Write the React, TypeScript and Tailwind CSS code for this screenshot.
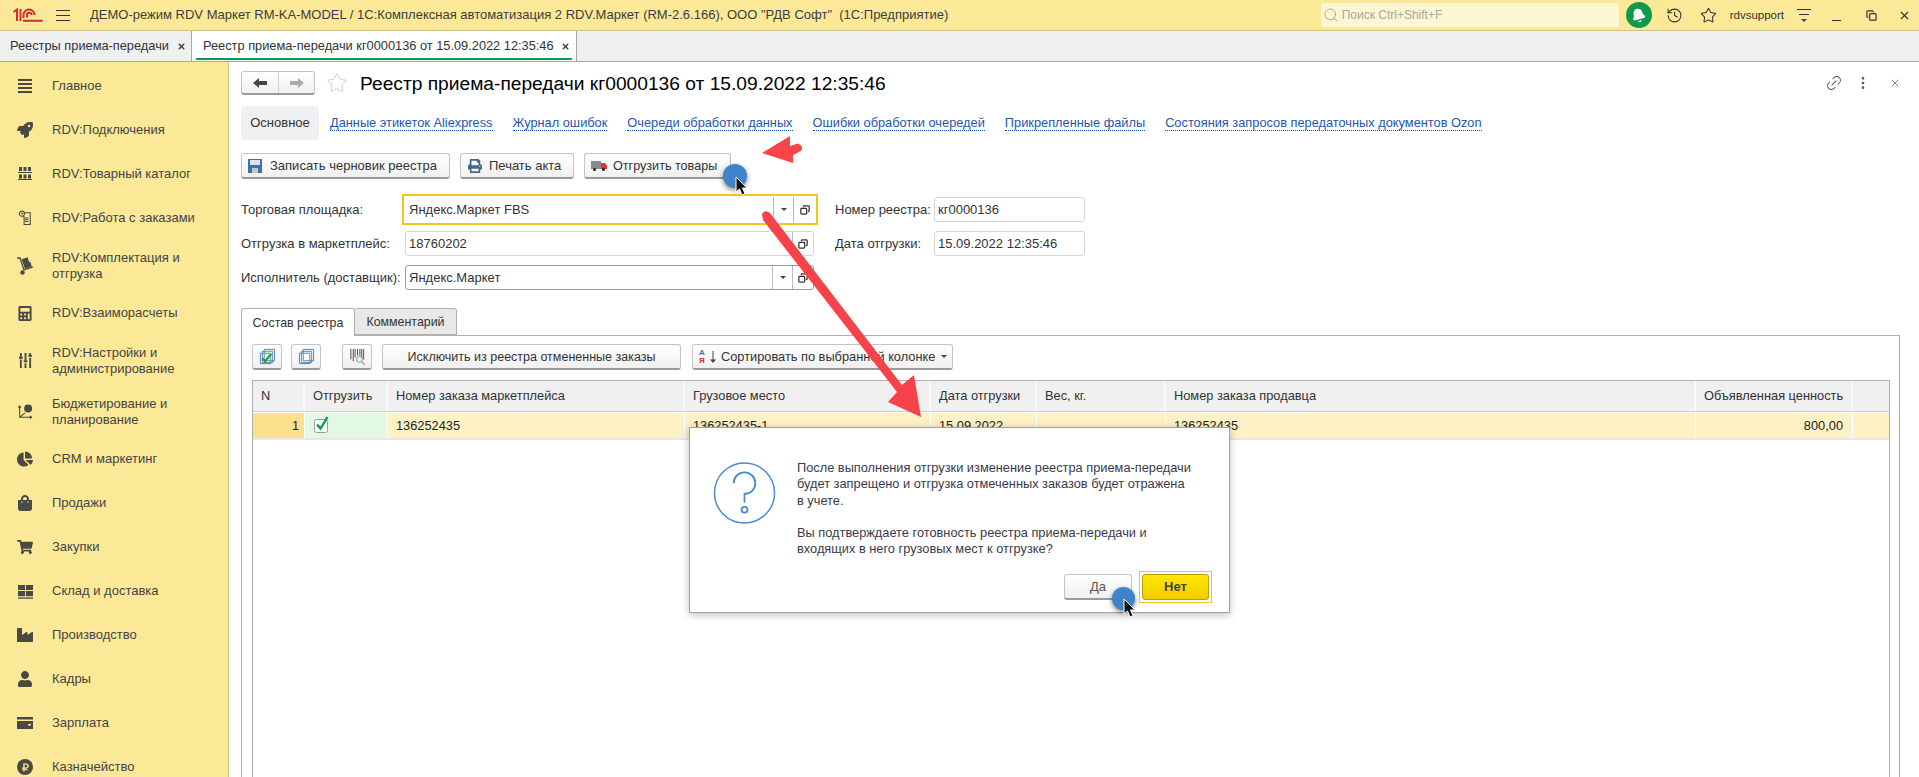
import type { ReactNode } from 'react';
import { Bell, Copy, History, Link2, MoreVertical, Search, Star, X } from 'lucide-react';
import {
    FaCalculator, FaChartPie, FaIndustry, FaRocket, FaShoppingBag, FaShoppingCart,
    FaUser, FaRubleSign, FaPrint,
} from 'react-icons/fa';

const iconCls = 'w-[16px] h-[16px] text-[#4a4a42]';

function Lines() {
    return (
        <svg viewBox="0 0 14 14" className="h-[14px] w-[14px] text-[#4a4a42]" fill="currentColor">
            <path d="M0 0h14v2H0zM0 4h14v2H0zM0 8h14v2H0zM0 12h14v2H0z" />
        </svg>
    );
}

function Pallets() {
    return (
        <svg viewBox="0 0 14 14" className="h-[14px] w-[14px] text-[#4a4a42]" fill="currentColor">
            <path d="M1 0h3v4H1zM5.500 0h3v4h-3zM10 0h3v4h-3zM0 5h14v1H0zM1 7.500h3v4H1zM5.500 7.500h3v4h-3zM10 7.500h3v4h-3zM0 12h14v1H0z" />
        </svg>
    );
}

function OrderClock() {
    return (
        <svg viewBox="0 0 16 18" className="w-[14px] h-[18px] text-[#4a4a42]" fill="none" stroke="currentColor" strokeWidth="1.2">
            <circle cx="4.500" cy="4" r="3" />
            <path d="M4.500 2.500V4h1.500M5 7.500h2v9h7V3H8M8 9h4M8 11h4M8 13h4" />
        </svg>
    );
}

function Hand() {
    return (
        <svg viewBox="0 0 18 18" className="w-[18px] h-[18px] text-[#4a4a42]" fill="none" stroke="currentColor" strokeWidth="1.3">
            <path d="M1 1h3l4 12 9-3" />
            <circle cx="6.500" cy="15.500" r="1.600" fill="currentColor" />
            <rect x="7" y="2" width="5" height="4" fill="currentColor" transform="rotate(-18 9 4)" />
            <rect x="8.500" y="6.500" width="6" height="4" fill="currentColor" transform="rotate(-18 11 8)" />
        </svg>
    );
}

function Sliders() {
    return (
        <svg viewBox="0 0 14 16" className="w-[13px] h-[15px] text-[#4a4a42]" fill="currentColor">
            <path d="M1 0h2v4h1v2H0V4h1zM1 7h2v9H1zM6 0h2v8h1v2H5V8h1zM6 11h2v5H6zM11 0h2v2h1v2h-4V2h1zM11 5h2v11h-2z" />
        </svg>
    );
}

function Budget() {
    return (
        <svg viewBox="0 0 18 18" className="w-[16px] h-[16px] text-[#4a4a42]" fill="none" stroke="currentColor" strokeWidth="1.2">
            <path d="M3 2v13h13M1.500 4L3 2l1.500 2M14.500 13.500l2 1.500-2 1.500M3 15l6-5" />
            <circle cx="12.500" cy="5" r="4.500" fill="currentColor" stroke="none" />
        </svg>
    );
}

function Warehouse() {
    return (
        <svg viewBox="0 0 16 16" className="w-[15px] h-[15px] text-[#4a4a42]" fill="currentColor">
            <path d="M0 1h7.500v5.500H0zM8.500 1H16v5.500H8.500zM0 7.500h7.500V13H0zM8.500 7.500H16V13H8.500zM0 14.500h16v1.200H0z" />
        </svg>
    );
}

function Wallet() {
    return (
        <svg viewBox="0 0 16 12" className="w-[16px] h-[12px] text-[#4a4a42]" fill="currentColor">
            <path d="M0 0h16v2.500H0zM0 4h16v8H0zM11 7v1.500h3V7z" fillRule="evenodd" />
        </svg>
    );
}

const menu: { label: ReactNode; icon: ReactNode; tall?: boolean }[] = [
    { label: 'Главное', icon: <Lines /> },
    { label: 'RDV:Подключения', icon: <FaRocket className={iconCls} /> },
    { label: 'RDV:Товарный каталог', icon: <Pallets /> },
    { label: 'RDV:Работа с заказами', icon: <OrderClock /> },
    { label: <>RDV:Комплектация и<br />отгрузка</>, icon: <Hand />, tall: true },
    { label: 'RDV:Взаиморасчеты', icon: <FaCalculator className="w-[14px] h-[15px] text-[#4a4a42]" /> },
    { label: <>RDV:Настройки и<br />администрирование</>, icon: <Sliders />, tall: true },
    { label: <>Бюджетирование и<br />планирование</>, icon: <Budget />, tall: true },
    { label: 'CRM и маркетинг', icon: <FaChartPie className={iconCls} /> },
    { label: 'Продажи', icon: <FaShoppingBag className={iconCls} /> },
    { label: 'Закупки', icon: <FaShoppingCart className={iconCls} /> },
    { label: 'Склад и доставка', icon: <Warehouse /> },
    { label: 'Производство', icon: <FaIndustry className={iconCls} /> },
    { label: 'Кадры', icon: <FaUser className={iconCls} /> },
    { label: 'Зарплата', icon: <Wallet /> },
    { label: 'Казначейство', icon: <span className="flex w-[16px] h-[16px] items-center justify-center rounded-full bg-[#4a4a42]"><FaRubleSign className="w-[9px] h-[9px] text-[#fbe997]" /></span> },
];

const links = [
    'Данные этикеток Aliexpress',
    'Журнал ошибок',
    'Очереди обработки данных',
    'Ошибки обработки очередей',
    'Прикрепленные файлы',
    'Состояния запросов передаточных документов Ozon',
];

const columns = [
    { title: 'N', value: '1', cell: 'bg-[#fde08c] justify-end pr-[5px]', head: 'pl-[8px]' },
    { title: 'Отгрузить', value: '', cell: 'bg-[#e3f8e3]', head: 'pl-[8px]' },
    { title: 'Номер заказа маркетплейса', value: '136252435', cell: 'bg-[#fdf1c5] pl-[8px]', head: 'pl-[8px]' },
    { title: 'Грузовое место', value: '136252435-1', cell: 'bg-[#fdf1c5] pl-[8px]', head: 'pl-[8px]' },
    { title: 'Дата отгрузки', value: '15.09.2022', cell: 'bg-[#fdf1c5] pl-[8px]', head: 'pl-[8px]' },
    { title: 'Вес, кг.', value: '', cell: 'bg-[#fdf1c5]', head: 'pl-[8px]' },
    { title: 'Номер заказа продавца', value: '136252435', cell: 'bg-[#fdf1c5] pl-[8px]', head: 'pl-[8px]' },
    { title: 'Объявленная ценность', value: '800,00', cell: 'bg-[#fdf1c5] justify-end pr-[9px]', head: 'pl-[8px]' },
    { title: '', value: '', cell: 'bg-[#fdf1c5]', head: '' },
];

function Btn({ className, children }: { className: string; children: ReactNode }) {
    return (
        <div className={`flex h-[26px] shrink-0 items-center rounded-[3px] border border-[#c4c4c4] border-b-[#9a9a9a] border-b-2 bg-gradient-to-b from-white to-[#f0f0f0] text-[#333] ${className}`}>
            {children}
        </div>
    );
}

function OpenIcon() {
    return <Copy className="h-[10px] w-[10px] -scale-x-100 text-[#333]" strokeWidth={3} />;
}

function Caret() {
    return <div className="h-0 w-0 border-x-[3px] border-t-[3px] border-x-transparent border-t-[#444]" />;
}

function Field({ value, dropdown, dark }: { value: string; dropdown?: boolean; dark?: boolean }) {
    return (
        <div className={`flex h-[25px] w-[409px] items-center rounded-[3px] border bg-white ${dark ? 'border-[#9a9a9a]' : 'border-[#d6d6d6]'}`}>
            <span className="flex-1 pl-[3px] text-[#333]">{value}</span>
            {dropdown && (
                <div className="flex h-full w-[20px] items-center justify-center border-l border-[#bbb]"><Caret /></div>
            )}
            <div className="flex h-full w-[21px] items-center justify-center border-l border-[#bbb]"><OpenIcon /></div>
        </div>
    );
}

function Cursor({ className }: { className: string }) {
    return (
        <svg viewBox="0 0 14 20" className={`absolute h-[20px] w-[14px] ${className}`}>
            <path d="M1 1v15l3.500-3 2.500 6 3-1.300-2.500-5.700H12z" fill="#111" stroke="#fff" strokeWidth="1" />
        </svg>
    );
}

export default function App() {
    return (
        <div className="relative flex h-[777px] w-full flex-col overflow-hidden bg-white font-['Liberation_Sans',Arial,sans-serif] text-[13px] leading-[16px] text-[#333]">
            {/* top bar */}
            <header className="flex h-[31px] shrink-0 items-center border-b border-[#cfc288] bg-[#fbe997]">
                <svg viewBox="0 0 30 14" className="ml-[13px] h-[14px] w-[30px]" fill="none" stroke="#d8262c" strokeWidth="1.900">
                    <path d="M0.500 4L4 1.500V13M7.500 13V1M10 12.700h19.500M10.500 10V7a5.500 5.500 0 0 1 11 0M14 9.500V7a2.300 2.300 0 0 1 4.600 0" />
                </svg>
                <div className="ml-[13px] flex w-[14px] flex-col gap-[4px]">
                    <div className="h-px bg-[#333]" />
                    <div className="h-px bg-[#333]" />
                    <div className="h-px bg-[#333]" />
                </div>
                <div className="ml-[20px] whitespace-pre text-[#3d3d3d]">ДЕМО-режим RDV Маркет RM-KA-MODEL / 1С:Комплексная автоматизация 2 RDV.Маркет (RM-2.6.166), ООО "РДВ Софт"  (1С:Предприятие)</div>
                <div className="ml-auto flex h-[24px] w-[298px] items-center rounded-[3px] bg-[#fdf6d2] pl-[2px] text-[12px] text-[#a8a8a0]">
                    <Search className="h-[16px] w-[16px] text-[#a8a8a0]" strokeWidth={1.5} />
                    <span className="ml-[3px]">Поиск Ctrl+Shift+F</span>
                </div>
                <div className="ml-[7px] flex h-[26px] w-[26px] items-center justify-center rounded-full bg-[#0b9b4b]">
                    <Bell className="h-[15px] w-[15px] rotate-[-15deg] text-white" fill="white" />
                </div>
                <History className="ml-[14px] h-[17px] w-[17px] text-[#333]" strokeWidth={1.5} />
                <Star className="ml-[17px] h-[17px] w-[17px] text-[#333]" strokeWidth={1.5} />
                <span className="ml-[13px] text-[11.500px] text-[#333]">rdvsupport</span>
                <div className="ml-[13px] flex w-[14px] flex-col items-center gap-[4px]">
                    <div className="h-px w-full bg-[#333]" />
                    <div className="h-px w-[10px] bg-[#333]" />
                    <Caret />
                </div>
                <div className="ml-[21px] mt-[10px] h-px w-[9px] bg-[#333]" />
                <Copy className="ml-[25px] h-[11px] w-[11px] text-[#333]" strokeWidth={2.6} />
                <X className="ml-[21px] mr-[8px] h-[13px] w-[13px] text-[#333]" strokeWidth={2} />
            </header>

            {/* open windows */}
            <div className="flex h-[31px] shrink-0 border-b border-[#a8a8a8] bg-[#f0f0f0] text-[12.800px]">
                <div className="flex w-[192px] items-center border-r border-[#a8a8a8] pl-[10px]">
                    <span>Реестры приема-передачи</span>
                    <X className="ml-[8px] h-[9px] w-[9px] text-[#444]" strokeWidth={4} />
                </div>
                <div className="relative flex w-[385px] items-center border-r border-[#a8a8a8] bg-white pl-[11px]">
                    <span>Реестр приема-передачи кг0000136 от 15.09.2022 12:35:46</span>
                    <X className="ml-[7px] h-[9px] w-[9px] text-[#444]" strokeWidth={4} />
                    <div className="absolute bottom-[1px] left-[4px] right-[4px] h-[2px] bg-[#0b9b4b]" />
                </div>
            </div>

            <div className="flex min-h-0 flex-1">
                {/* sections */}
                <nav className="flex w-[229px] shrink-0 flex-col overflow-hidden border-r border-[#cfc288] bg-[#fbe997] pt-[2px] text-[#444]">
                    {menu.map((item, i) => (
                        <div key={i} className={`flex shrink-0 items-center ${item.tall ? 'h-[51px]' : 'h-[44px]'}`}>
                            <div className="flex w-[52px] shrink-0 justify-center pr-[2px]">{item.icon}</div>
                            <div>{item.label}</div>
                        </div>
                    ))}
                </nav>

                {/* form */}
                <main className="flex min-w-0 flex-1 flex-col pl-[12px] pr-[19px] pt-[9px]">
                    <div className="flex h-[24px] items-center">
                        <div className="flex h-[24px] w-[74px] rounded-[3px] border border-[#c4c4c4] border-b-2 border-b-[#9a9a9a] bg-gradient-to-b from-white to-[#f0f0f0]">
                            <div className="flex w-[37px] items-center justify-center border-r border-[#d0d0d0]">
                                <svg viewBox="0 0 14 10" className="h-[10px] w-[14px]" fill="#444"><path d="M0 5l6-5v3h8v4H6v3z" /></svg>
                            </div>
                            <div className="flex flex-1 items-center justify-center">
                                <svg viewBox="0 0 14 10" className="h-[10px] w-[14px]" fill="#aaa"><path d="M14 5L8 0v3H0v4h8v3z" /></svg>
                            </div>
                        </div>
                        <Star className="ml-[11px] h-[22px] w-[22px] text-[#c8c8c8]" strokeWidth={1} />
                        <h1 className="ml-[12px] mt-[1px] text-[19.200px] font-normal leading-[24px] text-black">Реестр приема-передачи кг0000136 от 15.09.2022 12:35:46</h1>
                        <Link2 className="ml-auto mr-[12px] h-[18px] w-[18px] -rotate-45 text-[#555]" strokeWidth={1.3} />
                        <MoreVertical className="mr-[18px] h-[16px] w-[16px] text-[#555]" />
                        <X className="mr-[-1px] h-[12px] w-[12px] text-[#555]" strokeWidth={1.5} />
                    </div>

                    <div className="mt-[11px] flex h-[34px] items-center">
                        <div className="flex h-full w-[78px] items-center justify-center rounded-[4px] bg-[#f0f0f0]">Основное</div>
                        <div className="ml-[11px] flex gap-[20px] text-[12.800px]">
                            {links.map((l) => (
                                <span key={l} className="border-b border-dotted border-[#0b4fb0] leading-[15px] text-[#1f56ad]">{l}</span>
                            ))}
                        </div>
                    </div>

                    <div className="mt-[13px] flex gap-[10px]">
                        <Btn className="w-[209px] pl-[6px]">
                            <svg viewBox="0 0 14 14" className="h-[14px] w-[14px]">
                                <path d="M0 0h14v14H0z" fill="#3f72a8" />
                                <path d="M2 1h10v5H2z" fill="#d7e4f1" />
                                <path d="M4 9h6v5H4z" fill="#c7c7c7" />
                            </svg>
                            <span className="ml-[8px]">Записать черновик реестра</span>
                        </Btn>
                        <Btn className="w-[114px] pl-[7px]">
                            <FaPrint className="h-[14px] w-[14px] text-[#41688f]" />
                            <span className="ml-[7px]">Печать акта</span>
                        </Btn>
                        <Btn className="w-[147px] pl-[6px]">
                            <svg viewBox="0 0 16 10" className="h-[10px] w-[16px]">
                                <path d="M0 0h10v8H0z" fill="#8a8a8a" />
                                <path d="M10 2h4l2 3v3h-6z" fill="#d8352c" />
                                <circle cx="3.500" cy="8.500" r="1.500" fill="#222" />
                                <circle cx="12.500" cy="8.500" r="1.500" fill="#222" />
                            </svg>
                            <span className="ml-[6px] text-[12.600px]">Отгрузить товары</span>
                        </Btn>
                    </div>

                    <div className="mt-[15px] flex">
                        <div className="flex flex-col">
                            <div className="flex h-[31px] items-center">
                                <div className="w-[161px]">Торговая площадка:</div>
                                <div className="flex h-[31px] w-[416px] items-center justify-center border-2 border-[#f6c51c] p-px">
                                    <div className="flex h-full w-full items-center bg-white">
                                        <span className="flex-1 pl-[4px] text-[#333]">Яндекс.Маркет FBS</span>
                                        <div className="flex h-full w-[20px] items-center justify-center border-l border-[#bbb]"><Caret /></div>
                                        <div className="flex h-full w-[22px] items-center justify-center border-l border-[#bbb]"><OpenIcon /></div>
                                    </div>
                                </div>
                            </div>
                            <div className="mt-[6px] flex h-[25px] items-center">
                                <div className="w-[164px]">Отгрузка в маркетплейс:</div>
                                <Field value="18760202" />
                            </div>
                            <div className="mt-[9px] flex h-[25px] items-center">
                                <div className="w-[164px]">Исполнитель (доставщик):</div>
                                <Field value="Яндекс.Маркет" dropdown dark />
                            </div>
                        </div>
                        <div className="ml-[17px] flex flex-col pt-[3px]">
                            <div className="flex h-[25px] items-center">
                                <div className="w-[99px]">Номер реестра:</div>
                                <div className="flex h-[25px] w-[151px] items-center rounded-[3px] border border-[#d6d6d6] pl-[3px]">кг0000136</div>
                            </div>
                            <div className="mt-[9px] flex h-[25px] items-center">
                                <div className="w-[99px]">Дата отгрузки:</div>
                                <div className="flex h-[25px] w-[151px] items-center rounded-[3px] border border-[#d6d6d6] pl-[3px]">15.09.2022 12:35:46</div>
                            </div>
                        </div>
                    </div>

                    {/* page tabs */}
                    <div className="mt-[18px] flex h-[27px] shrink-0 text-[12.400px]">
                        <div className="z-10 flex h-[28px] w-[114px] items-center justify-center rounded-t-[3px] border border-b-0 border-[#b0b0b0] bg-white">Состав реестра</div>
                        <div className="flex h-[27px] w-[102px] items-center justify-center rounded-t-[3px] border border-l-0 border-[#b0b0b0] bg-[#e8e8e8]">Комментарий</div>
                    </div>
                    <section className="flex flex-1 flex-col border border-[#b0b0b0] border-b-0 pl-[10px] pr-[9px] pt-[8px]">
                        <div className="flex h-[26px] shrink-0">
                            <Btn className="w-[30px] justify-center">
                                <svg viewBox="0 0 18 18" className="h-[17px] w-[17px]" fill="#fff" stroke="#4f7fa8">
                                    <path d="M5.500 1.500h11v12h-11zM3.500 3.500h11v12h-11zM1.500 5.500h11v11h-11z" />
                                    <path d="M3.500 11l3 3 6.500-8" fill="none" stroke="#18a838" strokeWidth="2.400" />
                                </svg>
                            </Btn>
                            <Btn className="ml-[9px] w-[30px] justify-center">
                                <svg viewBox="0 0 18 18" className="h-[17px] w-[17px]" fill="#fff" stroke="#4f7fa8">
                                    <path d="M5.500 1.500h11v12h-11zM3.500 3.500h11v12h-11zM1.500 5.500h11v11h-11z" />
                                </svg>
                            </Btn>
                            <Btn className="ml-[21px] w-[30px] justify-center">
                                <svg viewBox="0 0 18 18" className="h-[17px] w-[17px]" stroke="#444" fill="none">
                                    <path d="M2 1v11M4.500 1v13M6.500 1v9M9 1v7M11.500 1v7M13.500 1v9M15.500 1v11" />
                                    <circle cx="11" cy="12" r="3.200" stroke="#6f93b8" fill="#e8f0f8" />
                                    <path d="M13.500 14.500l3 3" stroke="#b99a6a" strokeWidth="1.500" />
                                </svg>
                            </Btn>
                            <Btn className="ml-[10px] w-[299px] justify-center text-[12.500px]">Исключить из реестра отмененные заказы</Btn>
                            <Btn className="ml-[11px] w-[261px] pl-[6px]">
                                <span className="flex w-[9px] flex-col text-[8px] font-bold leading-[8px]">
                                    <span className="text-[#3a6fb0]">А</span>
                                    <span className="text-[#d8262c]">Я</span>
                                </span>
                                <svg viewBox="0 0 8 14" className="ml-[1px] h-[14px] w-[8px]" stroke="#444" fill="#444">
                                    <path d="M4 1v10" />
                                    <path d="M1 9.500h6L4 13z" stroke="none" />
                                </svg>
                                <span className="ml-[4px] text-[12.800px]">Сортировать по выбранной колонке</span>
                                <span className="ml-[6px]"><Caret /></span>
                            </Btn>
                        </div>

                        <div className="mt-[10px] flex flex-1 flex-col border-x border-t border-[#b0b0b0] text-[12.800px]">
                            <div className="grid h-[31px] shrink-0 grid-cols-[52px_83px_297px_246px_106px_129px_530px_157px_36px] border-b border-[#cfcfcf] bg-[#f0f0f0]">
                                {columns.map((c, i) => (
                                    <div key={i} className={`flex items-center border-r-2 border-[#fafafa] last:border-r-0 ${c.head}`}>{c.title}</div>
                                ))}
                            </div>
                            <div className="grid mt-[1px] h-[27px] shrink-0 grid-cols-[52px_83px_297px_246px_106px_129px_530px_157px_36px] border-b-2 border-[#e8e8e8]">
                                {columns.map((c, i) => (
                                    <div key={i} className={`flex items-center border-r border-white last:border-r-0 text-[#222] ${c.cell}`}>
                                        {i === 1 ? (
                                            <svg viewBox="0 0 16 17" className="ml-[9px] mb-[3px] h-[17px] w-[16px]">
                                                <rect x="0.500" y="3.500" width="13" height="13" rx="2" fill="#fff" stroke="#9a9a9a" />
                                                <path d="M3 8.500l3.500 4L13.500 1" fill="none" stroke="#0b9b4b" strokeWidth="2.400" />
                                            </svg>
                                        ) : c.value}
                                    </div>
                                ))}
                            </div>
                        </div>
                    </section>
                </main>
            </div>

            {/* annotation arrows over the page */}
            <svg viewBox="0 0 1919 777" className="pointer-events-none absolute left-0 top-0 h-[777px] w-[1919px]">
                <path d="M762 153L790 136L790 146L798 143.500Q804 146 801 151L793 155L793 163Z" fill="#fb4448" />
                <path d="M762 214Q765 209 770 213L902 385L914 375L921 417L888 402L897 392L763 220Z" fill="#f6434a" />
            </svg>

            {/* confirmation box */}
            <div className="absolute left-[689px] top-[427px] flex h-[186px] w-[541px] flex-col border border-[#a0a0a0] bg-white shadow-[0_2px_8px_rgba(0,0,0,0.25)]">
                <div className="flex pl-[23px] pt-[32px]">
                    <svg viewBox="0 0 64 66" className="h-[66px] w-[63px] shrink-0" fill="none" stroke="#4a8ad0" strokeWidth="1.500">
                        <circle cx="32" cy="33" r="30.500" />
                        <path d="M21 23a11 11 0 1 1 11 11v9" strokeWidth="1.800" />
                        <circle cx="32" cy="50" r="3" strokeWidth="1.800" />
                    </svg>
                    <div className="ml-[21px] text-[12.800px] leading-[16.250px] text-[#3a3a4a]">
                        <div>После выполнения отгрузки изменение реестра приема-передачи</div>
                        <div>будет запрещено и отгрузка отмеченных заказов будет отражена</div>
                        <div>в учете.</div>
                        <div className="mt-[16px]">Вы подтверждаете готовность реестра приема-передачи и</div>
                        <div>входящих в него грузовых мест к отгрузке?</div>
                    </div>
                </div>
                <div className="mt-auto mb-[9px] flex items-center justify-end pr-[17px]">
                    <Btn className="w-[68px] justify-center text-[#555]">Да</Btn>
                    <div className="ml-[7px] border border-[#f6c51c] p-[2px]">
                        <div className="flex h-[26px] w-[67px] items-center justify-center rounded-[3px] border border-[#b8a000] bg-gradient-to-b from-[#ffe600] to-[#f2cc00] font-bold text-[#444]">Нет</div>
                    </div>
                </div>
            </div>

            {/* click markers */}
            <div className="absolute left-[723px] top-[164px] h-[24px] w-[24px] rounded-full bg-[#3f84c8] shadow-[0_2px_5px_rgba(0,0,0,0.5)]" />
            <Cursor className="left-[735px] top-[176px]" />
            <div className="absolute left-[1112px] top-[587px] h-[23px] w-[23px] rounded-full bg-[#3f84c8] shadow-[0_2px_5px_rgba(0,0,0,0.5)]" />
            <Cursor className="left-[1123px] top-[598px]" />
        </div>
    );
}
